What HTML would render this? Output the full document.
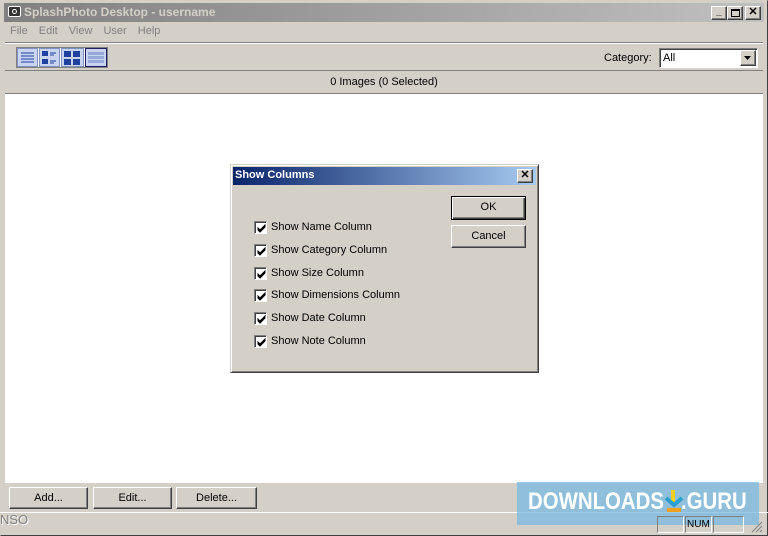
<!DOCTYPE html><html><head><style>
*{margin:0;padding:0;box-sizing:border-box}
body{width:768px;height:536px;background:#d4d0c8;font-family:"Liberation Sans",sans-serif;font-size:11px;position:relative;overflow:hidden;color:#000}
.a{position:absolute}
.btn{position:absolute;background:#d4d0c8;border:1px solid;border-color:#fff #404040 #404040 #fff;box-shadow:inset -1px -1px #808080;text-align:center}
.cb{position:absolute;left:254px;width:13px;height:13px;background:#fff;border:1px solid;border-color:#808080 #fff #fff #808080;box-shadow:inset 1px 1px #404040}
.cb svg{position:absolute;left:2px;top:2px}
.lbl{position:absolute;left:271px}
</style></head><body>
<div class="a" style="left:0;top:0;width:768px;height:536px;border:1px solid;border-color:#d4d0c8 #404040 #404040 #d4d0c8"></div>
<div class="a" style="left:4px;top:3px;width:760px;height:19px;background:linear-gradient(90deg,#808080,#c0c0c0);"></div>
<div class="a" style="left:8px;top:6px;width:13px;height:11px;border:1px solid #fff;border-radius:2px;background:#333"><div class="a" style="left:3px;top:2px;width:5px;height:5px;border-radius:50%;border:1px solid #fff"></div></div>
<div class="a" style="left:24px;top:5px;color:#d4d0c8;font-weight:bold;font-size:12px">SplashPhoto Desktop - username</div>
<div class="btn" style="left:711px;top:6px;width:16px;height:14px;font-size:10px;line-height:10px;font-weight:bold">_</div>
<div class="btn" style="left:727px;top:6px;width:16px;height:14px"><div class="a" style="left:3px;top:2px;width:9px;height:8px;border:1px solid #000;border-top-width:2px"></div></div>
<div class="btn" style="left:745px;top:6px;width:16px;height:14px;font-size:11px;line-height:11px;font-weight:bold">✕</div>
<div class="a" style="left:10px;top:25px;color:#808080;font-size:11px;word-spacing:8px">File Edit View User Help</div>
<div class="a" style="left:5px;top:42px;width:758px;height:2px;border-top:1px solid #808080;border-bottom:1px solid #fff"></div>
<div class="a" style="left:16px;top:47px;width:92px;height:21px;border:1px solid #808080;background:#fff"></div>
<div class="a" style="left:17px;top:48px;width:21px;height:19px;background:#c8d4f0;border:1px solid #8090c0"><svg width="19" height="17"><g stroke="#2040a0"><path d="M3 4h13M3 7h13M3 10h13M3 13h13"/></g></svg></div>
<div class="a" style="left:39px;top:48px;width:21px;height:19px;background:#c8d4f0;border:1px solid #8090c0"><svg width="19" height="17"><g fill="#2040a0"><rect x="2" y="2" width="6" height="5"/><rect x="2" y="10" width="6" height="5"/></g><path d="M10 4h6M10 6h4M10 12h6M10 14h4" stroke="#2040a0"/></svg></div>
<div class="a" style="left:61px;top:48px;width:23px;height:19px;background:#c8d4f0;border:1px solid #8090c0"><svg width="21" height="17"><g fill="#2040a0"><rect x="2" y="2" width="7" height="6"/><rect x="11" y="2" width="7" height="6"/><rect x="2" y="10" width="7" height="6"/><rect x="11" y="10" width="7" height="6"/></g></svg></div>
<div class="a" style="left:85px;top:48px;width:22px;height:19px;background:#c8d4f0;border:1px solid #202060"><svg width="20" height="17"><g fill="#98a8d8"><rect x="2" y="3" width="16" height="3"/><rect x="2" y="7" width="16" height="3"/><rect x="2" y="11" width="16" height="3"/></g></svg></div>
<div class="a" style="left:604px;top:52px">Category:</div>
<div class="a" style="left:659px;top:48px;width:99px;height:20px;background:#fff;border:1px solid;border-color:#808080 #fff #fff #808080;box-shadow:inset 1px 1px #404040;padding:3px 3px">All</div>
<div class="btn" style="left:740px;top:50px;width:16px;height:16px"><svg width="14" height="14"><path d="M3 5h7l-3.5 4z"/></svg></div>
<div class="a" style="left:5px;top:70px;width:758px;height:1px;background:#808080"></div>
<div class="a" style="left:0;top:76px;width:768px;text-align:center">0 Images (0 Selected)</div>
<div class="a" style="left:5px;top:93px;width:758px;height:390px;background:#fff;border-top:1px solid #808080"></div>
<div class="btn" style="left:9px;top:487px;width:79px;height:22px;line-height:20px">Add...</div>
<div class="btn" style="left:93px;top:487px;width:79px;height:22px;line-height:20px">Edit...</div>
<div class="btn" style="left:176px;top:487px;width:81px;height:22px;line-height:20px">Delete...</div>
<div class="a" style="left:0;top:512px;width:768px;height:1px;background:#fff"></div>
<div class="a" style="left:0;top:512px;color:#808080;font-size:13px;text-shadow:1px 1px #fff">NSO</div>
<div class="a" style="left:517px;top:482px;width:242px;height:43px;background:rgba(120,185,225,0.75)"></div>
<div class="a" style="left:528px;top:488px;color:#fff;font-size:24px;font-weight:bold;font-family:'Liberation Sans Narrow','Liberation Sans',sans-serif;transform:scaleX(.85);transform-origin:left">DOWNLOADS&nbsp;&nbsp;&nbsp;.GURU</div>
<svg class="a" style="left:663px;top:488px" width="22" height="26"><path d="M10 2v12" stroke="#f0d020" stroke-width="4"/><path d="M3 10l8 7 8-7" stroke="#2aa0d0" stroke-width="4" fill="none"/><rect x="4" y="20" width="14" height="4" fill="#f0a020"/></svg>
<div class="a" style="left:657px;top:516px;width:27px;height:17px;border:1px solid;border-color:#808080 #fff #fff #808080"></div>
<div class="a" style="left:685px;top:516px;width:27px;height:17px;border:1px solid;border-color:#808080 #fff #fff #808080;padding:2px 1px;font-size:10px">NUM</div>
<div class="a" style="left:713px;top:516px;width:31px;height:17px;border:1px solid;border-color:#808080 #fff #fff #808080"></div>
<svg class="a" style="left:750px;top:520px" width="13" height="13"><path d="M12 2L2 12M12 6L6 12M12 10L10 12" stroke="#808080"/></svg>

<div class="a" style="left:230px;top:164px;width:309px;height:209px;background:#d4d0c8;border:1px solid;border-color:#d4d0c8 #404040 #404040 #d4d0c8;box-shadow:inset 1px 1px #fff,inset -1px -1px #808080"></div>
<div class="a" style="left:233px;top:167px;width:303px;height:18px;background:linear-gradient(90deg,#0a246a,#a6caf0)"></div>
<div class="a" style="left:235px;top:169px;color:#fff;font-weight:bold">Show Columns</div>
<div class="btn" style="left:517px;top:169px;width:16px;height:14px;font-size:11px;line-height:11px;font-weight:bold">✕</div>
<div class="btn" style="left:451px;top:196px;width:75px;height:24px;line-height:20px;border:1px solid #000;box-shadow:inset 1px 1px #fff,inset -1px -1px #404040,inset -2px -2px #808080">OK</div>
<div class="btn" style="left:451px;top:225px;width:75px;height:23px;line-height:20px">Cancel</div>
<div class="cb" style="top:221px"><svg width="9" height="9"><path d="M1 4l2 2 5-5v2l-5 5-2-2z" fill="#000" stroke="#000"/></svg></div><div class="lbl" style="top:221px">Show Name Column</div>
<div class="cb" style="top:244px"><svg width="9" height="9"><path d="M1 4l2 2 5-5v2l-5 5-2-2z" fill="#000" stroke="#000"/></svg></div><div class="lbl" style="top:244px">Show Category Column</div>
<div class="cb" style="top:267px"><svg width="9" height="9"><path d="M1 4l2 2 5-5v2l-5 5-2-2z" fill="#000" stroke="#000"/></svg></div><div class="lbl" style="top:267px">Show Size Column</div>
<div class="cb" style="top:289px"><svg width="9" height="9"><path d="M1 4l2 2 5-5v2l-5 5-2-2z" fill="#000" stroke="#000"/></svg></div><div class="lbl" style="top:289px">Show Dimensions Column</div>
<div class="cb" style="top:312px"><svg width="9" height="9"><path d="M1 4l2 2 5-5v2l-5 5-2-2z" fill="#000" stroke="#000"/></svg></div><div class="lbl" style="top:312px">Show Date Column</div>
<div class="cb" style="top:335px"><svg width="9" height="9"><path d="M1 4l2 2 5-5v2l-5 5-2-2z" fill="#000" stroke="#000"/></svg></div><div class="lbl" style="top:335px">Show Note Column</div>
</body></html>
